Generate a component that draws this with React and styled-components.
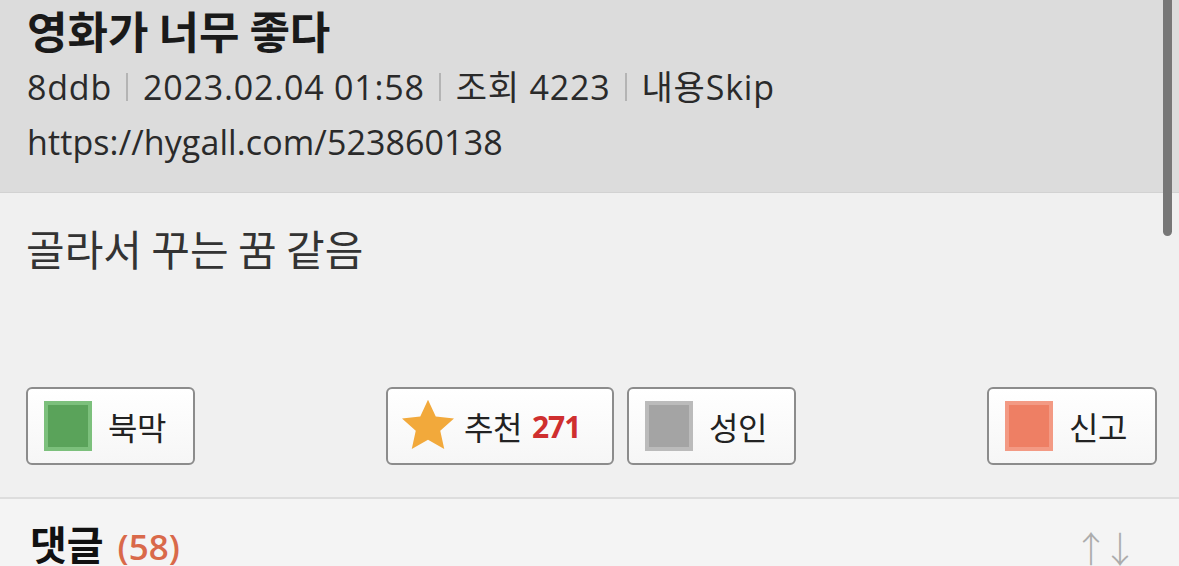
import React from 'react';
import styled, { createGlobalStyle } from 'styled-components';

const Global = createGlobalStyle`
  html, body {
    margin: 0;
    padding: 0;
    background: #f0f0f0;
    overflow: hidden;
  }
  body {
    font-family: "Open Sans", "Noto Sans CJK KR", sans-serif;
    color: #222;
  }
`;

const Page = styled.div`
  position: relative;
  width: 1179px;
  height: 566px;
  overflow: hidden;
`;

const Header = styled.header`
  background: #dcdcdc;
  height: 193px;
  box-sizing: border-box;
  padding: 2px 27px 0;
  border-bottom: 1px solid #d2d2d2;
`;

const Title = styled.h1`
  margin: 0;
  font-family: "Noto Sans CJK KR", sans-serif;
  font-size: 44px;
  font-weight: 700;
  line-height: 56px;
  color: #1a1a1a;
`;

const Meta = styled.div`
  font-size: 34px;
  line-height: 58px;
  color: #2a2a2a;
  display: flex;
  align-items: center;
  letter-spacing: 0.8px;
`;

const Sep = styled.span`
  display: inline-block;
  width: 2px;
  height: 28px;
  background: #b4b4b4;
  margin: 0 15px 0 14px;
`;

const Url = styled.div`
  font-size: 34px;
  line-height: 52px;
  color: #2a2a2a;
  letter-spacing: 0.1px;
`;

const Body = styled.section`
  height: 306px;
  box-sizing: border-box;
  padding: 22px 22px 0 26px;
  display: flex;
  flex-direction: column;
  border-bottom: 2px solid #dddddd;
`;

const Content = styled.p`
  margin: 0;
  font-family: "Noto Sans CJK KR", sans-serif;
  font-size: 42px;
  line-height: 66px;
  color: #333;
`;

const Actions = styled.div`
  margin-top: auto;
  margin-bottom: 32px;
  display: flex;
  justify-content: space-between;
  align-items: center;
`;

const Group = styled.div`
  display: flex;
  gap: 13px;
`;

const Button = styled.button`
  height: 78px;
  width: ${p => p.$w}px;
  box-sizing: border-box;
  border: 2px solid #8c8c8c;
  border-radius: 6px;
  background: linear-gradient(#ffffff, #f6f6f6);
  display: flex;
  align-items: center;
  padding: 0 0 0 ${p => p.$pad || 16}px;
  gap: ${p => p.$gap || 16}px;
  font-family: "Noto Sans CJK KR", sans-serif;
  font-size: 32px;
  color: #222;
  letter-spacing: -0.5px;
  cursor: pointer;
`;

const Square = styled.span`
  width: 48px;
  height: 50px;
  box-sizing: border-box;
  background: ${p => p.$c};
  border: 4px solid ${p => p.$b};
`;

const Count = styled.b`
  color: #cf2f2f;
  font-family: "Open Sans", sans-serif;
  font-weight: 700;
  font-size: 30px;
  letter-spacing: -1px;
  margin-left: 4px;
`;

const Comments = styled.section`
  background: #f4f4f4;
  height: 100px;
  padding: 16px 48px 0 30px;
  display: flex;
  justify-content: space-between;
  align-items: flex-start;
`;

const CommentTitle = styled.h2`
  margin: 0;
  font-family: "Noto Sans CJK KR", sans-serif;
  font-size: 40px;
  font-weight: 700;
  line-height: 56px;
  color: #111;
`;

const CommentCount = styled.span`
  color: #d9694a;
  font-family: "Open Sans", sans-serif;
  font-weight: 600;
  font-size: 35px;
  margin-left: 14px;
`;

const Sort = styled.span`
  font-family: "Noto Sans CJK KR", sans-serif;
  font-weight: 300;
  font-size: 36px;
  color: #acacac;
  line-height: 56px;
  letter-spacing: -7px;
  padding-top: 4px;
`;

const Scrollbar = styled.div`
  position: absolute;
  top: 0;
  right: 7px;
  width: 9px;
  height: 236px;
  border-radius: 0 0 5px 5px;
  background: #777;
`;

const Star = () => (
  <svg width="60" height="60" viewBox="0 0 24 24">
    <path
      d="M12 1.5l3.1 6.7 7.3.8-5.5 4.9 1.6 7.3L12 17.5l-6.5 3.7 1.6-7.3-5.5-4.9 7.3-.8z"
      fill="#f2a93b"
    />
  </svg>
);

export default function App() {
  return (
    <Page>
      <Global />
      <Header>
        <Title>영화가 너무 좋다</Title>
        <Meta>
          8ddb<Sep />2023.02.04 01:58<Sep />조회 4223<Sep />내용Skip
        </Meta>
        <Url>https://hygall.com/523860138</Url>
      </Header>
      <Body>
        <Content>골라서 꾸는 꿈 같음</Content>
        <Actions>
          <Group>
            <Button $w={169}>
              <Square $c="#5aa35a" $b="#7cc07c" />
              북막
            </Button>
          </Group>
          <Group>
            <Button $w={228} $pad={10} $gap={6}>
              <Star />
              추천<Count>271</Count>
            </Button>
            <Button $w={169}>
              <Square $c="#a4a4a4" $b="#bbbbbb" />
              성인
            </Button>
          </Group>
          <Group>
            <Button $w={170}>
              <Square $c="#ee7f64" $b="#f39a84" />
              신고
            </Button>
          </Group>
        </Actions>
      </Body>
      <Comments>
        <CommentTitle>
          댓글<CommentCount>(58)</CommentCount>
        </CommentTitle>
        <Sort>↑↓</Sort>
      </Comments>
      <Scrollbar />
    </Page>
  );
}
